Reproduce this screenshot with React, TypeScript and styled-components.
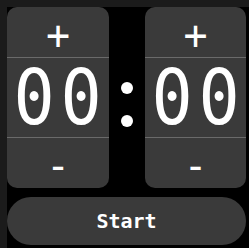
import React from 'react';
import styled, { createGlobalStyle } from 'styled-components';

const GlobalStyle = createGlobalStyle`
  html, body {
    margin: 0;
    padding: 0;
    background: #1b1b1b;
  }
`;

const Screen = styled.div`
  margin: 7px 0 0 7px;
  width: 242px;
  height: 241px;
  background: #000;
  box-sizing: border-box;
  padding-right: 3px;
  display: flex;
  flex-direction: column;
  gap: 9px;
  font-family: 'DejaVu Sans Mono', monospace;
  color: #fff;
`;

const TimerRow = styled.div`
  display: grid;
  grid-template-columns: 102px 36px 101px;
  height: 181px;
`;

const Spinner = styled.div`
  background: #3a3a3a;
  border-radius: 10px;
  display: flex;
  flex-direction: column;
  overflow: hidden;
`;

const StepButton = styled.button`
  height: 50px;
  border: 0;
  background: transparent;
  color: #fff;
  font-family: 'DejaVu Sans Mono', monospace;
  font-size: 40px;
  padding: 6px 0 0;
  display: flex;
  align-items: center;
  justify-content: center;
  line-height: 1;
`;

const Digits = styled.div`
  height: 80px;
  border-top: 1px solid #6a6a6a;
  border-bottom: 1px solid #6a6a6a;
  display: flex;
  align-items: center;
  justify-content: center;
  gap: 13px;
  padding-right: 1px;
  font-size: 76px;
  line-height: 1;
`;

const Digit = styled.span`
  display: inline-flex;
  justify-content: center;
  width: 34px;
  transform: scaleX(0.9);
`;

const Colon = styled.div`
  display: flex;
  flex-direction: column;
  align-items: center;
  gap: 21px;
  padding-top: 75px;
`;

const Dot = styled.span`
  width: 12px;
  height: 12px;
  border-radius: 50%;
  background: #fff;
`;

const StartButton = styled.button`
  height: 48px;
  width: 239px;
  border: 0;
  border-radius: 24px;
  background: #3a3a3a;
  color: #fff;
  font-family: 'DejaVu Sans Mono', monospace;
  font-weight: bold;
  font-size: 20px;
  padding: 0;
`;

const TimeSpinner: React.FC<{ value: string }> = ({ value }) => (
  <Spinner>
    <StepButton>+</StepButton>
    <Digits>
      {value.split('').map((d, i) => (
        <Digit key={i}>{d}</Digit>
      ))}
    </Digits>
    <StepButton>-</StepButton>
  </Spinner>
);

export default function App() {
  return (
    <>
      <GlobalStyle />
      <Screen>
        <TimerRow>
          <TimeSpinner value="00" />
          <Colon>
            <Dot />
            <Dot />
          </Colon>
          <TimeSpinner value="00" />
        </TimerRow>
        <StartButton>Start</StartButton>
      </Screen>
    </>
  );
}
